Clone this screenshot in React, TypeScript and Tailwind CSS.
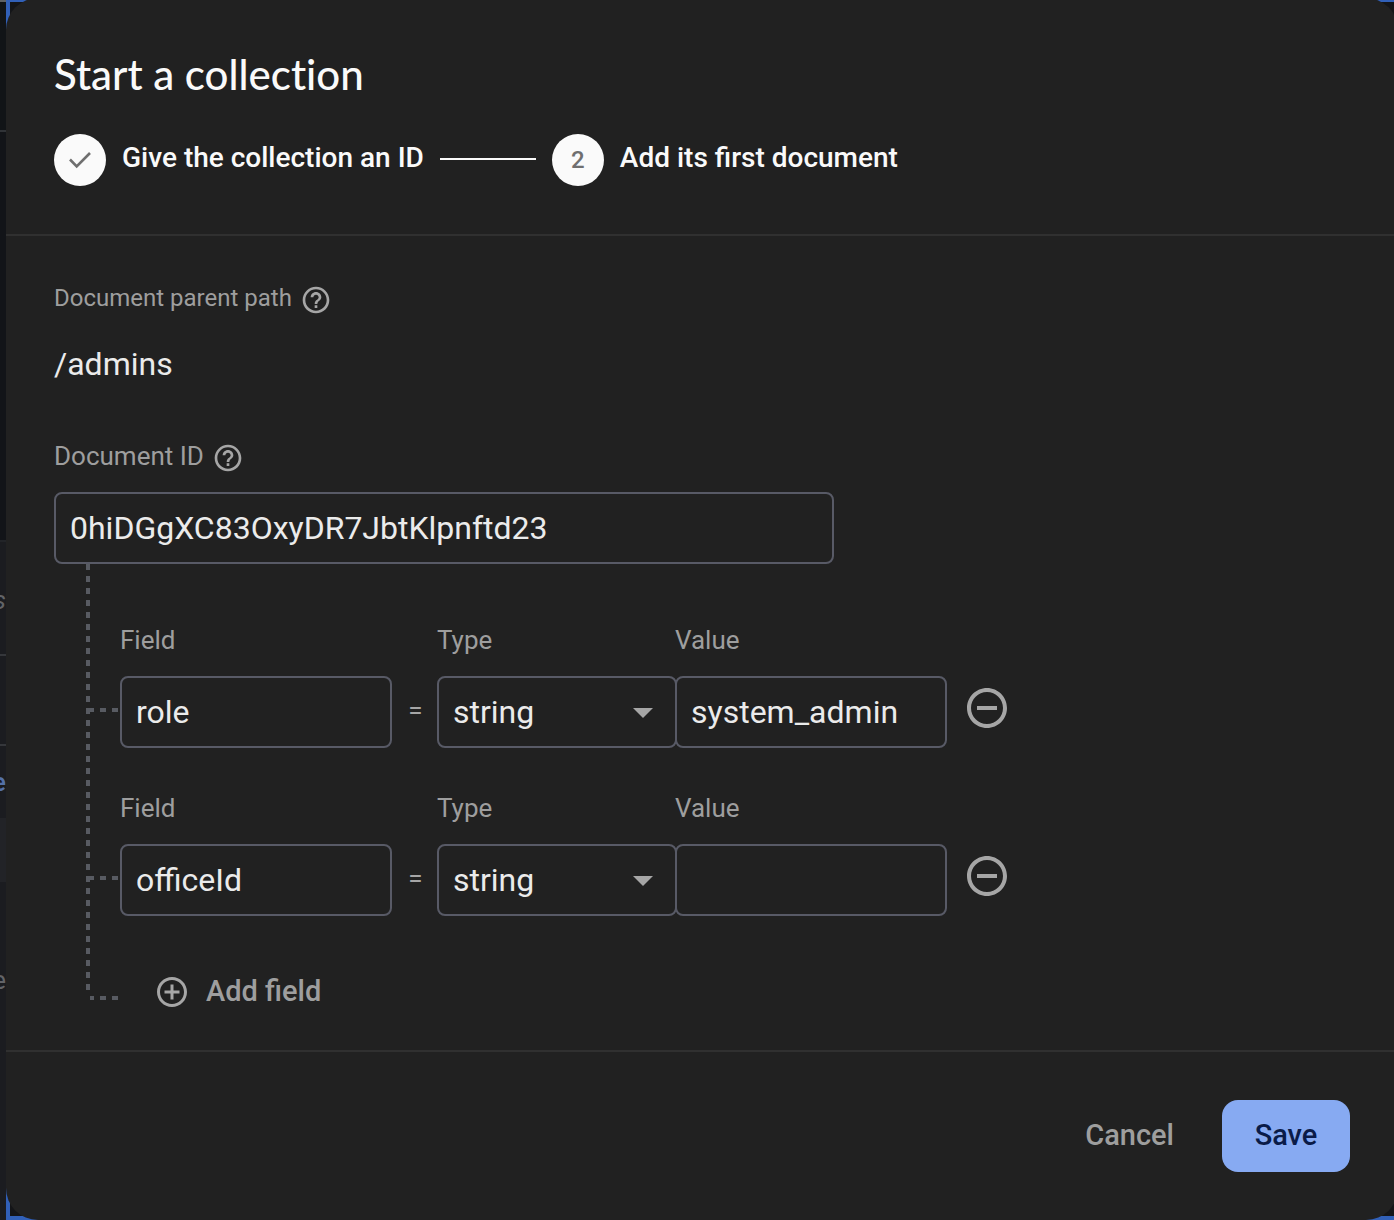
import { useId, useState } from "react";
import {
  MdAddCircleOutline,
  MdArrowDropDown,
  MdHelpOutline,
  MdRemoveCircleOutline,
} from "react-icons/md";

type FieldRow = { id: number; name: string; type: string; value: string };

const boxClass =
  "h-[72px] rounded-lg border-2 border-[#585a66] bg-transparent px-3.5 text-[32px] text-[#ebebeb] outline-none";

function PageEdge() {
  return (
    <div
      aria-hidden="true"
      className="flex w-1.5 shrink-0 flex-col overflow-hidden bg-[#1b1c20] text-[26px] text-[#626468]"
    >
      <div className="h-[130px] shrink-0 border-t-2 border-[#5f6265] bg-[#111417]" />
      <div className="h-[410px] shrink-0 border-t-2 border-[#303337] bg-[#121418]" />
      <div className="flex h-[114px] shrink-0 items-center justify-end border-t-2 border-[#222428] pt-1 italic">s</div>
      <div className="h-[90px] shrink-0 border-t-2 border-[#35373b]" />
      <div className="flex h-[74px] shrink-0 items-center justify-end border-t-2 border-[#35373b] font-medium text-[#5471a8]">
        e
      </div>
      <div className="h-[64px] shrink-0 bg-[#222327]" />
      <div className="flex h-[196px] shrink-0 items-center justify-end">e</div>
    </div>
  );
}

function StepBadge({ children }: { children: React.ReactNode }) {
  return (
    <span className="flex size-[52px] shrink-0 items-center justify-center rounded-full bg-[#fafafa] text-2xl font-medium text-[#6f6f6f]">
      {children}
    </span>
  );
}

function HelpButton({ label }: { label: string }) {
  return (
    <button type="button" aria-label={label} className="text-[#a6a6a6]">
      <MdHelpOutline className="size-8" />
    </button>
  );
}

function Branch() {
  return (
    <span className="h-1 w-[30px] shrink-0 bg-[repeating-linear-gradient(90deg,#585b62_0_4px,transparent_4px_10px,#585b62_10px_12px)]" />
  );
}

function FieldEditor({
  row,
  onChange,
  onRemove,
}: {
  row: FieldRow;
  onChange: (row: FieldRow) => void;
  onRemove: () => void;
}) {
  const id = useId();
  return (
    <div className="flex flex-col gap-4">
      <div className="flex h-10 items-center pl-[30px] text-[26px] leading-10 text-[#9e9e9e]">
        <label htmlFor={id + "field"} className="w-[317px]">Field</label>
        <label htmlFor={id + "type"} className="w-[238px]">Type</label>
        <label htmlFor={id + "value"}>Value</label>
      </div>
      <div className="flex items-center">
        <div className="mb-1 flex">
          <Branch />
        </div>
        <input
          id={id + "field"}
          className={`${boxClass} w-[272px]`}
          value={row.name}
          onChange={(e) => onChange({ ...row, name: e.target.value })}
        />
        <span className="mb-1 w-[45px] pl-0.5 text-center text-[26px] text-[#a6a6a6]">=</span>
        <div className="relative">
          <select
            id={id + "type"}
            className={`${boxClass} w-60 appearance-none`}
            value={row.type}
            onChange={(e) => onChange({ ...row, type: e.target.value })}
          >
            <option>string</option>
            <option>number</option>
            <option>boolean</option>
          </select>
          <MdArrowDropDown className="pointer-events-none absolute top-3 right-2.5 size-12 text-[#a6a6a6]" />
        </div>
        <input
          id={id + "value"}
          className={`${boxClass} -ml-0.5 w-[272px]`}
          value={row.value}
          onChange={(e) => onChange({ ...row, value: e.target.value })}
        />
        <button type="button" aria-label="Remove field" onClick={onRemove} className="mb-2 ml-4 text-[#a6a6a6]">
          <MdRemoveCircleOutline className="size-12" />
        </button>
      </div>
    </div>
  );
}

export default function App() {
  const [docId, setDocId] = useState("0hiDGgXC83OxyDR7JbtKlpnftd23");
  const [rows, setRows] = useState<FieldRow[]>([
    { id: 1, name: "role", type: "string", value: "system_admin" },
    { id: 2, name: "officeId", type: "string", value: "" },
  ]);

  return (
    <div className="flex min-h-screen overflow-hidden bg-[#1b1c20] font-[Roboto,sans-serif]">
      <PageEdge />
      <div className="flex min-w-0 flex-1 border-t-2 border-b-4 border-l-4 border-[#3160b8] bg-[#141518]">
        <section
          role="dialog"
          aria-labelledby="dialog-title"
          className="-m-1 flex flex-1 flex-col rounded-[32px] bg-[#212121]"
        >
          <header className="border-b-2 border-[#303030] px-12 pt-12 pb-12">
            <h1
              id="dialog-title"
              className="font-['Lato_Medium',Lato,sans-serif] text-[42px] leading-14 font-medium text-[#fafafa] [font-variant-ligatures:none]"
            >
              Start a collection
            </h1>
            <ol className="mt-8 flex items-center gap-4 text-[28px] font-medium text-[#fafafa]">
              <li className="flex items-center gap-4">
                <StepBadge>
                  <svg viewBox="0 0 28 28" fill="none" stroke="currentColor" strokeWidth="2.6" className="size-7" aria-label="Done">
                    <path d="M4 13.5 L10.7 20.3 L24 7" />
                  </svg>
                </StepBadge>
                <span className="mb-1">Give the collection an ID</span>
              </li>
              <li aria-hidden="true" className="mb-0.5 h-0.5 w-24 bg-[#fafafa]" />
              <li className="flex items-center gap-4">
                <StepBadge>2</StepBadge>
                <span className="mb-1">Add its first document</span>
              </li>
            </ol>
          </header>

          <div className="flex-1 px-12 pt-12 pb-6">
            <div className="flex h-8 items-center gap-2 text-2xl text-[#9e9e9e]">
              <span className="mb-1">Document parent path</span>
              <HelpButton label="About the parent path" />
            </div>
            <p className="mt-7 text-[32px] leading-10 text-[#ebebeb]">/admins</p>

            <div className="mt-[58px] flex h-8 items-center gap-2 text-[26px] text-[#9e9e9e]">
              <label htmlFor="document-id" className="mb-1">Document ID</label>
              <HelpButton label="About the document ID" />
            </div>
            <input
              id="document-id"
              className={`${boxClass} mt-[18px] block w-[780px]`}
              value={docId}
              onChange={(e) => setDocId(e.target.value)}
            />

            <div className="ml-8 flex">
              <div className="mb-7 w-1 shrink-0 bg-[repeating-linear-gradient(180deg,#585b62_0_6px,transparent_6px_12px)]" />
              <div className="flex flex-col gap-10 pt-14">
                {rows.map((row) => (
                  <FieldEditor
                    key={row.id}
                    row={row}
                    onChange={(next) => setRows(rows.map((r) => (r.id === next.id ? next : r)))}
                    onRemove={() => setRows(rows.filter((r) => r.id !== row.id))}
                  />
                ))}
                <div className="mt-2 flex h-[56px] items-center">
                  <div className="mt-3 flex">
                    <Branch />
                  </div>
                  <button
                    type="button"
                    onClick={() => setRows([...rows, { id: Date.now(), name: "", type: "string", value: "" }])}
                    className="ml-[34px] flex items-center gap-4 text-[29px] font-medium text-[#9e9e9e]"
                  >
                    <MdAddCircleOutline className="size-9 text-[#a6a6a6]" />
                    Add field
                  </button>
                </div>
              </div>
            </div>
          </div>

          <footer className="flex items-center justify-end gap-4 border-t-2 border-[#303030] px-12 py-12">
            <button type="button" className="h-[72px] px-8 text-[29px] font-medium text-[#9e9e9e]">
              Cancel
            </button>
            <button
              type="button"
              className="h-[72px] w-32 rounded-2xl bg-[#87aaf2] text-[29px] font-medium text-[#0a1b48]"
            >
              Save
            </button>
          </footer>
        </section>
      </div>
    </div>
  );
}
